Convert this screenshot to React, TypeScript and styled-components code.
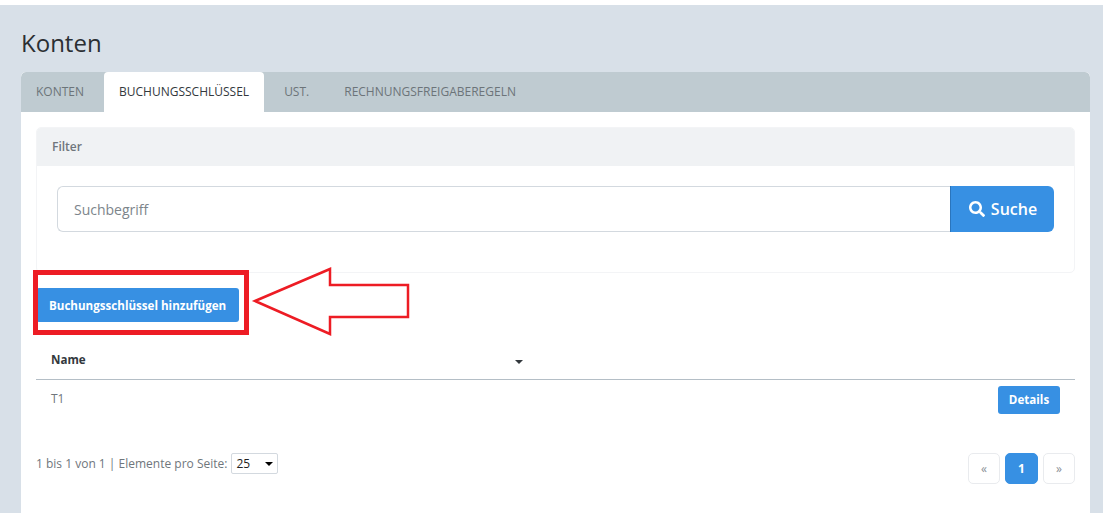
import React from 'react';
import styled, { createGlobalStyle } from 'styled-components';
import { FaSearch } from 'react-icons/fa';

const GlobalStyle = createGlobalStyle`
  html, body {
    margin: 0;
    padding: 0;
    background: #fff;
    font-family: 'Open Sans', 'Liberation Sans', sans-serif;
    overflow: hidden;
  }
  * {
    box-sizing: border-box;
  }
`;

const Page = styled.div`
  margin-top: 5px;
  height: 508px;
  padding: 0 13px 0 21px;
  background: #d8e0e8;
  overflow: hidden;
`;

const Title = styled.h1`
  margin: 0;
  height: 67px;
  padding-top: 22px;
  font-size: 24px;
  line-height: 31px;
  font-weight: 400;
  color: #2b2f33;
`;

const Panel = styled.div`
  background: #fff;
  border-radius: 5px 5px 0 0;
  height: 441px;
  overflow: hidden;
`;

const Tabs = styled.div`
  display: flex;
  height: 40px;
  background: #bfcbd1;
  border-radius: 5px 5px 0 0;
`;

const Tab = styled.div<{ $active?: boolean }>`
  padding: 0 15px;
  margin-right: 5px;
  font-size: 12px;
  line-height: 40px;
  color: ${({ $active }) => ($active ? '#33383d' : '#6c7479')};
  background: ${({ $active }) => ($active ? '#fff' : 'transparent')};
  border-radius: 4px 4px 0 0;
`;

const Content = styled.div`
  padding: 15px 15px 0;
`;

const FilterCard = styled.div`
  height: 146px;
  border: 1px solid #f3f4f6;
  border-radius: 5px;
`;

const FilterHeader = styled.div`
  height: 38px;
  padding: 0 15px;
  background: #f0f2f4;
  border-radius: 4px 4px 0 0;
  font-size: 12px;
  font-weight: 600;
  line-height: 37px;
  color: #6f767c;
`;

const FilterBody = styled.div`
  display: flex;
  padding: 20px 20px 0;
`;

const SearchInput = styled.input`
  flex: 1;
  min-width: 0;
  height: 46px;
  padding: 0 16px;
  border: 1px solid #d3d9df;
  border-right: 0;
  border-radius: 6px 0 0 6px;
  outline: 0;
  font-family: inherit;
  font-size: 14px;
  color: #33383d;
  &::placeholder {
    color: #7d858b;
    opacity: 1;
  }
`;

const SearchButton = styled.button`
  display: flex;
  align-items: center;
  justify-content: center;
  gap: 6px;
  width: 104px;
  height: 46px;
  padding: 0 0 0 1px;
  border: 0;
  border-left: 1px solid #2a75bd;
  border-radius: 0 6px 6px 0;
  background: #3790e3;
  color: #fff;
  font-family: inherit;
  font-size: 16px;
  font-weight: 600;
`;

const ActionRow = styled.div`
  position: relative;
  height: 34px;
  margin-top: 15px;
`;

const PrimaryButton = styled.button`
  height: 34px;
  padding: 0 13px;
  border: 0;
  border-radius: 3px;
  background: #3790e3;
  color: #fff;
  font-family: inherit;
  font-size: 11.6px;
  font-weight: 700;
`;

/* hand drawn annotation, sits over the button */
const Highlight = styled.div`
  position: absolute;
  left: -3px;
  top: -18px;
  width: 216px;
  height: 65px;
  border: 5px solid #ed1c24;
  pointer-events: none;
`;

const Arrow = styled.svg`
  position: absolute;
  left: 216px;
  top: -22px;
  overflow: visible;
`;

const TableHead = styled.div`
  display: flex;
  align-items: center;
  justify-content: space-between;
  height: 37px;
  margin-top: 21px;
  padding: 0 552px 4px 15px;
  border-bottom: 1px solid #b4bec6;
  font-size: 11.6px;
  font-weight: 700;
  color: #33383d;
`;

const SortCaret = styled.span`
  margin-top: 5px;
  width: 0;
  height: 0;
  border-left: 4px solid transparent;
  border-right: 4px solid transparent;
  border-top: 4px solid #33383d;
`;

const TableRow = styled.div`
  display: flex;
  justify-content: space-between;
  height: 50px;
  padding: 6px 15px 0;
  font-size: 12px;
  color: #6f767c;
`;

const RowName = styled.span`
  line-height: 26px;
`;

const DetailsButton = styled(PrimaryButton)`
  height: 28px;
  width: 62px;
  padding: 0 0 2px;
`;

const Footer = styled.div`
  display: flex;
  justify-content: space-between;
  margin-top: 23px;
`;

const PageInfo = styled.div`
  display: flex;
  align-items: center;
  align-self: flex-start;
  height: 21px;
  font-size: 12px;
  color: #6f767c;
`;

const SelectWrap = styled.span`
  position: relative;
  margin-left: 4px;
  &::after {
    content: '';
    position: absolute;
    right: 5px;
    top: 9px;
    border-left: 4px solid transparent;
    border-right: 4px solid transparent;
    border-top: 4px solid #000;
  }
`;

const PageSize = styled.select`
  display: block;
  appearance: none;
  width: 47px;
  height: 21px;
  padding: 0 0 0 4px;
  border: 1px solid #d3d9df;
  border-radius: 2px;
  background: #fff;
  font-family: inherit;
  font-size: 12px;
  color: #222;
`;

const Pagination = styled.div`
  display: flex;
  gap: 5px;
  height: 31px;
`;

const PageLink = styled.div<{ $active?: boolean }>`
  display: flex;
  align-items: center;
  justify-content: center;
  width: ${({ $active }) => ($active ? '33px' : '32px')};
  border: 1px solid ${({ $active }) => ($active ? '#3790e3' : '#e9ebee')};
  border-radius: 5px;
  background: ${({ $active }) => ($active ? '#3790e3' : '#fff')};
  color: ${({ $active }) => ($active ? '#fff' : '#8a9096')};
  font-size: 12px;
  font-weight: ${({ $active }) => ($active ? 700 : 400)};
`;

export default function App() {
  return (
    <>
      <GlobalStyle />
      <Page>
        <Title>Konten</Title>
        <Panel>
          <Tabs>
            <Tab>KONTEN</Tab>
            <Tab $active>BUCHUNGSSCHLÜSSEL</Tab>
            <Tab>UST.</Tab>
            <Tab>RECHNUNGSFREIGABEREGELN</Tab>
          </Tabs>
          <Content>
            <FilterCard>
              <FilterHeader>Filter</FilterHeader>
              <FilterBody>
                <SearchInput placeholder="Suchbegriff" />
                <SearchButton>
                  <FaSearch size={16} />
                  Suche
                </SearchButton>
              </FilterBody>
            </FilterCard>
            <ActionRow>
              <PrimaryButton>Buchungsschlüssel hinzufügen</PrimaryButton>
              <Highlight />
              <Arrow width="158" height="72">
                <path
                  d="M3 35 L78 3 V19 H156 V51 H78 V68 Z"
                  fill="#fff"
                  stroke="#ed1c24"
                  strokeWidth="2.5"
                />
              </Arrow>
            </ActionRow>
            <TableHead>
              Name
              <SortCaret />
            </TableHead>
            <TableRow>
              <RowName>T1</RowName>
              <DetailsButton>Details</DetailsButton>
            </TableRow>
            <Footer>
              <PageInfo>
                1 bis 1 von 1 | Elemente pro Seite:
                <SelectWrap>
                  <PageSize defaultValue="25">
                    <option>10</option>
                    <option>25</option>
                    <option>50</option>
                  </PageSize>
                </SelectWrap>
              </PageInfo>
              <Pagination>
                <PageLink>«</PageLink>
                <PageLink $active>1</PageLink>
                <PageLink>»</PageLink>
              </Pagination>
            </Footer>
          </Content>
        </Panel>
      </Page>
    </>
  );
}
